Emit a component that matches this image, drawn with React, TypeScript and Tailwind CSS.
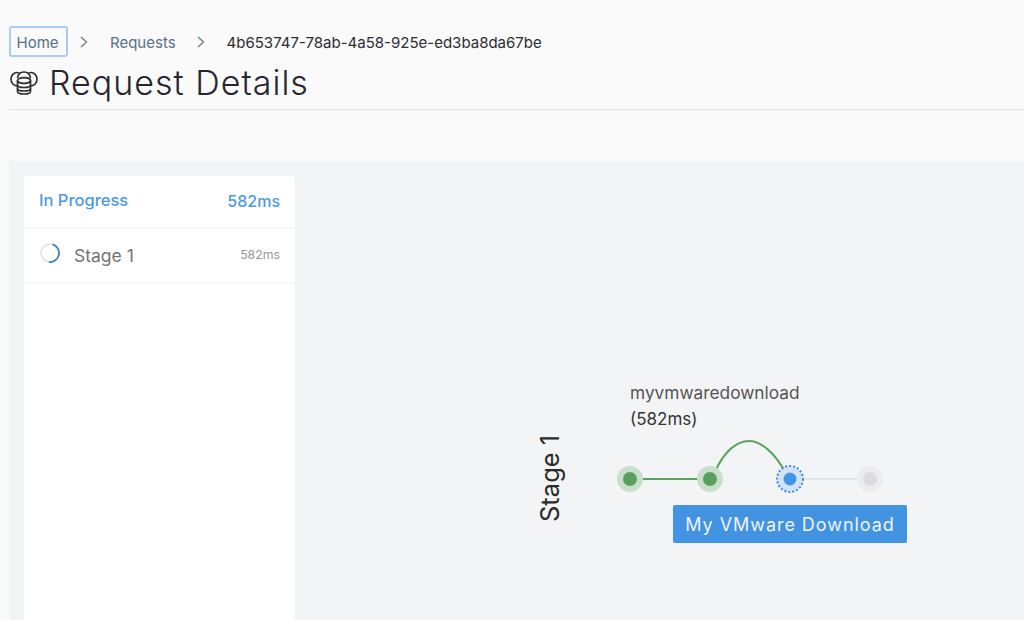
const font = "font-['Inter','Liberation_Sans',sans-serif]";

function TitleIcon() {
  return (
    <svg width="28" height="24" viewBox="0 0 28 24" fill="none" stroke="#2f2f2f" strokeWidth="1.7" className="shrink-0">
      <path d="M7 15C3.5 14.5 1 11.5 1 8C1 4.2 3.8 1.5 7 1.5C8.5 1.5 9.5 2 10.5 3" />
      <path d="M21 15C24.5 14.5 27 11.5 27 8C27 4.2 24.2 1.5 21 1.5C19.5 1.5 18.5 2 17.5 3" />
      <path d="M7.5 7C8 3.2 10.5 1 14 1C17.5 1 20 3.2 20.5 7" />
      <ellipse cx="14" cy="9.5" rx="6.5" ry="2.8" />
      <path d="M7.5 9.5V20.5C7.5 22 10.4 23 14 23C17.6 23 20.5 22 20.5 20.5V9.5" />
      <path d="M7.5 14C7.5 15.5 10.4 16.5 14 16.5C17.6 16.5 20.5 15.5 20.5 14" />
      <path d="M7.5 17.5C7.5 19 10.4 20 14 20C17.6 20 20.5 19 20.5 17.5" />
    </svg>
  );
}

function Chevron() {
  return (
    <svg width="8" height="12" viewBox="0 0 8 12" fill="none" stroke="#6f8193" strokeWidth="1.4" className="shrink-0">
      <path d="M1 1L6.5 6L1 11" />
    </svg>
  );
}

function Spinner() {
  return (
    <svg width="22" height="22" viewBox="0 0 22 22" fill="none" className="shrink-0">
      <circle cx="11" cy="11" r="9" stroke="#dfe1e3" strokeWidth="1.6" />
      <path d="M13.5 2.4A9 9 0 0 1 10 20" stroke="#3f7fbd" strokeWidth="1.8" />
    </svg>
  );
}

function Diagram() {
  return (
    <svg width="300" height="80" viewBox="0 0 300 80" fill="none" className="absolute left-[600px] top-[430px]">
      <path d="M30 49H110" stroke="#5ba35f" strokeWidth="2" />
      <path d="M115 42C124 21 137 11 149 11C161 11 175 23 185 42" stroke="#5ba35f" strokeWidth="2" />
      <path d="M190 49H270" stroke="#e3e4e6" strokeWidth="2" />
      <circle cx="30" cy="49" r="13" fill="#c9dfcb" />
      <circle cx="30" cy="49" r="7" fill="#57a15c" />
      <circle cx="110" cy="49" r="13" fill="#c9dfcb" />
      <circle cx="110" cy="49" r="7" fill="#57a15c" />
      <circle cx="190" cy="49" r="13" fill="#d3e3f5" stroke="#3f8fe0" strokeWidth="2" strokeDasharray="2 2" />
      <circle cx="190" cy="49" r="6.5" fill="#4295e4" />
      <circle cx="270" cy="49" r="13" fill="#ececee" />
      <circle cx="270" cy="49" r="7" fill="#dcdcdd" />
    </svg>
  );
}

export default function App() {
  return (
    <div className={`${font} relative h-[620px] w-[1024px] overflow-hidden bg-[#fafafa]`}>
      <div className="flex h-[161px] flex-col pl-[9px]">
        <div className="mt-[26px] flex h-[31px] items-center text-[15px]">
          <span className="flex h-[31px] w-[59px] items-center justify-center rounded-[3px] border-2 border-[#a9cdf5] pt-[3px] pr-[2px] text-[#56718c]">Home</span>
          <span className="ml-[12px]"><Chevron /></span>
          <span className="ml-[22px] pt-[3px] text-[#56718c]">Requests</span>
          <span className="ml-[21px]"><Chevron /></span>
          <span className="ml-[22px] pt-[3px] text-[15px] text-[#2c2c33]">4b653747-78ab-4a58-925e-ed3ba8da67be</span>
        </div>
        <div className="mt-[6px] flex h-[40px] items-center">
          <span className="ml-[1px] -mt-[1px]"><TitleIcon /></span>
          <h1 className="ml-[11px] text-[34px] font-light leading-[40px] tracking-[1px] text-[#262630]">Request Details</h1>
        </div>
        <div className="mt-[6px] h-[1px] bg-[#e2e3e5]" />
      </div>

      <div className="ml-[9px] h-[459px] bg-[#f3f4f6] pl-[15px] pt-[15px]">
        <div className="flex h-[445px] w-[271px] flex-col rounded-t-[3px] bg-white">
          <div className="flex h-[53px] items-center justify-between border-b-2 border-[#f6f7f8] px-[15px] pb-[2px] text-[16px] font-medium text-[#4b9ae4]">
            <span className="text-[16.5px]">In Progress</span>
            <span>582ms</span>
          </div>
          <div className="flex h-[55px] items-center border-b-2 border-[#f6f7f8] pl-[15px] pr-[15px]">
            <span className="-mt-[6px]"><Spinner /></span>
            <span className="ml-[13px] pt-[2px] text-[17.5px] text-[#747474]">Stage 1</span>
            <span className="ml-auto text-[12.3px] text-[#969696]">582ms</span>
          </div>
        </div>
      </div>

      <span className="absolute left-[630px] top-[382px] text-[17.3px] leading-[22px] text-[#555]">myvmwaredownload</span>
      <span className="absolute left-[630px] top-[408px] text-[17px] leading-[22px] text-[#333]">(582ms)</span>
      <span className="absolute left-[510px] top-[465px] w-[80px] -rotate-90 translate-y-[3px] whitespace-nowrap text-center text-[25.5px] leading-[28px] text-[#2b2b2b]">Stage 1</span>
      <Diagram />
      <div className="absolute left-[673px] top-[505px] flex h-[38px] w-[234px] items-center justify-center rounded-[2px] bg-[#4293e2] pt-[1px] text-[18px] tracking-[0.95px] text-[#eef5fc]">
        My VMware Download
      </div>
    </div>
  );
}
